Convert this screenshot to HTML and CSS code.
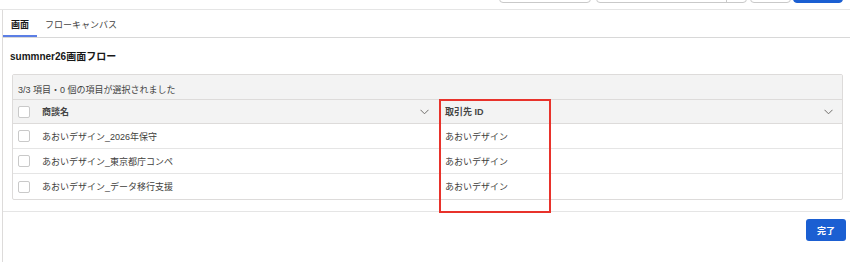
FILE: index.html
```html
<!DOCTYPE html>
<html lang="ja">
<head>
  <meta charset="UTF-8">
  <title>summner26画面フロー</title>
  <link rel="stylesheet" href="styles.css">
</head>
<body>
  <div class="topbar">
    <button class="top-btn btn-a"></button>
    <div class="top-btn btn-split"><span class="split-main"></span><span class="split-arrow"></span></div>
    <button class="top-btn btn-c"></button>
    <button class="top-btn btn-blue"></button>
  </div>

  <div class="panel">
    <div class="tabs">
      <div class="tab active">画面</div>
      <div class="tab">フローキャンバス</div>
    </div>

    <div class="content">
      <h2 class="title">summner26画面フロー</h2>

      <div class="card">
        <div class="info">3/3 項目・0 個の項目が選択されました</div>

        <div class="row head">
          <div class="cell check"><span class="box"></span></div>
          <div class="cell name">商談名
            <svg class="chev" width="9" height="6" viewBox="0 0 9 6"><path d="M0.5 0.8 L4.5 4.8 L8.5 0.8" fill="none" stroke="#706e6b" stroke-width="1"/></svg>
          </div>
          <div class="cell account">取引先 ID
            <svg class="chev" width="9" height="6" viewBox="0 0 9 6"><path d="M0.5 0.8 L4.5 4.8 L8.5 0.8" fill="none" stroke="#706e6b" stroke-width="1"/></svg>
          </div>
        </div>

        <div class="row">
          <div class="cell check"><span class="box"></span></div>
          <div class="cell name">あおいデザイン_2026年保守</div>
          <div class="cell account">あおいデザイン</div>
        </div>
        <div class="row">
          <div class="cell check"><span class="box"></span></div>
          <div class="cell name">あおいデザイン_東京都庁コンペ</div>
          <div class="cell account">あおいデザイン</div>
        </div>
        <div class="row last">
          <div class="cell check"><span class="box"></span></div>
          <div class="cell name">あおいデザイン_データ移行支援</div>
          <div class="cell account">あおいデザイン</div>
        </div>

        <div class="highlight"></div>
      </div>
    </div>

    <div class="footer">
      <button class="done">完了</button>
    </div>
  </div>
</body>
</html>
```

FILE: styles.css
```css
body {
  margin: 0;
  font-family: 'Liberation Sans', 'Noto Sans CJK JP', sans-serif;
  font-size: 9px;
  color: #3e3e3c;
  background: #fff;
}

.topbar {
  height: 9px;
  border-bottom: 1px solid #e5e5e5;
  display: flex;
  justify-content: flex-end;
  align-items: flex-end;
  padding-right: 7px;
  overflow: hidden;
}

.top-btn {
  height: 24px;
  margin-bottom: 6px;
  padding: 0;
  border: 1px solid #c9c9c9;
  border-radius: 4px;
  background: #fff;
  box-sizing: border-box;
  flex: none;
}

.btn-a {
  width: 92px;
}

.btn-split {
  width: 151px;
  margin-left: 5px;
  display: flex;
}

.split-main {
  width: 129px;
  border-right: 1px solid #c9c9c9;
}

.btn-c {
  width: 41px;
  margin-left: 3px;
}

.btn-blue {
  width: 50px;
  margin-left: 2px;
  background: #1b5fd2;
  border-color: #1b5fd2;
}

.panel {
  margin-left: 2px;
  border-left: 1px solid #dddbda;
  min-height: calc(100vh - 10px);
}

.tabs {
  display: flex;
  border-bottom: 1px solid #d8d8d8;
}

.tab {
  height: 27px;
  box-sizing: border-box;
  padding: 9px 8px 0;
  line-height: 12px;
  border-bottom: 2px solid transparent;
  color: #444;
}

.tab.active {
  font-weight: bold;
  color: #181818;
  border-bottom-color: #5b7ee5;
}

.content {
  padding: 0 7px 11px 7px;
}

.title {
  margin: 12px 0 10px;
  font-size: 10px;
  line-height: 14px;
  font-weight: bold;
  color: #181818;
}

.card {
  position: relative;
  margin-left: 2px;
  border: 1px solid #dddbda;
  border-radius: 2px;
}

.info {
  height: 24px;
  box-sizing: border-box;
  padding: 9px 0 0 5px;
  line-height: 12px;
  background: #f3f3f3;
  color: #444;
}

.row {
  display: grid;
  grid-template-columns: 29px 397px 1fr;
  height: 25px;
  border-bottom: 1px solid #e5e5e5;
  box-sizing: border-box;
}

.row.head {
  height: 25px;
  background: #f3f3f3;
  border-top: 1px solid #dddbda;
  border-bottom: 1px solid #dddbda;
  font-weight: bold;
  color: #444;
}

.row.last {
  border-bottom: none;
}

.cell {
  display: flex;
  align-items: center;
}

.check {
  padding-left: 5px;
}

.box {
  width: 12px;
  height: 12px;
  box-sizing: border-box;
  border: 1px solid #c9c9c9;
  border-radius: 2px;
  background: #fff;
}

.name {
  justify-content: space-between;
  padding-right: 10px;
}

.account {
  justify-content: space-between;
  padding: 0 9px 0 6px;
}

.head .account {
  border-left: 1px solid #dddbda;
  padding-left: 5px;
}

.highlight {
  position: absolute;
  left: 426px;
  top: 24px;
  width: 112px;
  height: 114px;
  box-sizing: border-box;
  border: 2px solid #e8322b;
}

.footer {
  border-top: 1px solid #e5e5e5;
  display: flex;
  justify-content: flex-end;
  padding: 7px 4px 0 0;
}

.done {
  width: 40px;
  height: 22px;
  padding: 0;
  border: none;
  border-radius: 3px;
  background: #1b5fd2;
  color: #fff;
  font-family: inherit;
  font-size: 9px;
  font-weight: bold;
}
```
